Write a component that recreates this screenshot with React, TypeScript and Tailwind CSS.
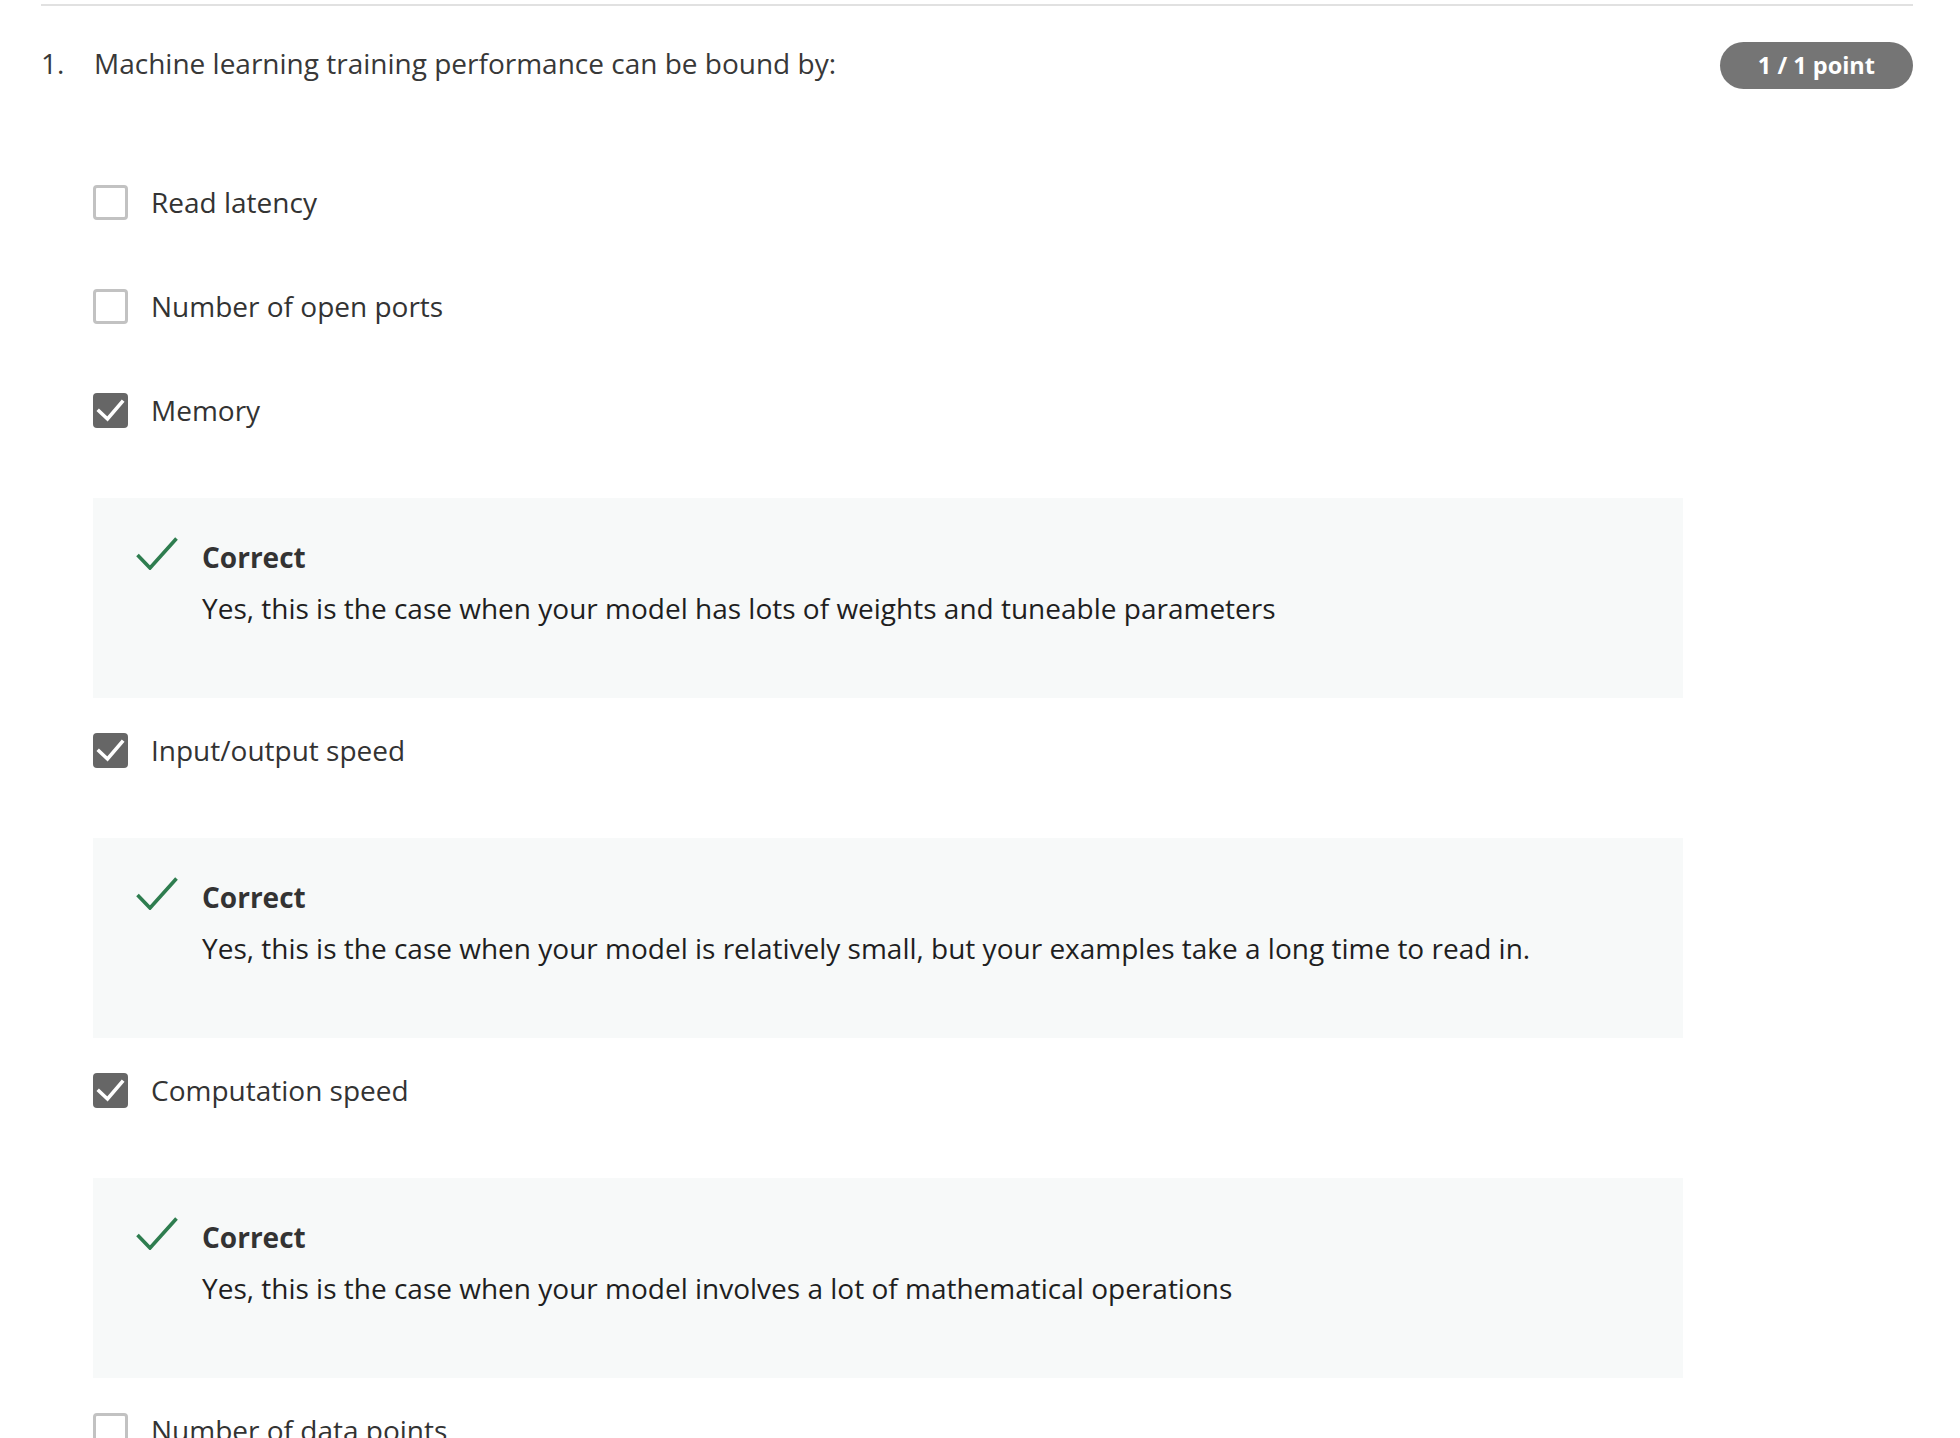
const OPTIONS: { label: string; checked: boolean; feedback?: string }[] = [
  { label: 'Read latency', checked: false },
  { label: 'Number of open ports', checked: false },
  {
    label: 'Memory',
    checked: true,
    feedback: 'Yes, this is the case when your model has lots of weights and tuneable parameters',
  },
  {
    label: 'Input/output speed',
    checked: true,
    feedback:
      'Yes, this is the case when your model is relatively small, but your examples take a long time to read in.',
  },
  {
    label: 'Computation speed',
    checked: true,
    feedback: 'Yes, this is the case when your model involves a lot of mathematical operations',
  },
  { label: 'Number of data points', checked: false },
];

function Checkbox({ checked }: { checked: boolean }) {
  if (checked) {
    return (
      <span className="flex h-[35px] w-[35px] shrink-0 items-center justify-center rounded-[4px] bg-[#666666]">
        <svg width="35" height="35" viewBox="0 0 35 35" fill="none">
          <polyline
            points="6,18 14.5,26 29,9"
            stroke="#ffffff"
            strokeWidth="3.6"
            strokeLinecap="square"
          />
        </svg>
      </span>
    );
  }
  return (
    <span className="h-[35px] w-[35px] shrink-0 rounded-[4px] border-[3px] border-[#c2c2c2] bg-white" />
  );
}

function Feedback({ text }: { text: string }) {
  return (
    <div className="mt-[36px] flex h-[200px] w-[1590px] bg-[#f7f9f9] pl-[43px]">
      <svg className="mt-[39px] shrink-0" width="42" height="33" viewBox="0 0 42 33" fill="none">
        <polyline points="1.5,18 14,31 40.5,1.5" stroke="#2e7d4f" strokeWidth="3.6" />
      </svg>
      <div className="ml-[24px] pt-[39px]">
        <div className="text-[28px] font-bold leading-[40px] text-[#333333]">Correct</div>
        <div className="mt-[11px] text-[28px] leading-[40px] text-[#1f1f1f]">{text}</div>
      </div>
    </div>
  );
}

export default function App() {
  return (
    <div className="min-h-screen overflow-hidden bg-white pl-[41px] pr-[47px] pt-[4px] font-['Open_Sans',sans-serif]">
      <div className="h-[2px] bg-[#e1e1e1]" />

      <div className="mt-[36px] flex items-start justify-between">
        <div className="flex text-[28px] leading-[43px] text-[#383838]">
          <span className="w-[53px]">1.</span>
          <span>Machine learning training performance can be bound by:</span>
        </div>
        <span className="flex h-[47px] items-center rounded-full bg-[#757575] px-[38px] text-[23.5px] font-bold text-white">
          1 / 1 point
        </span>
      </div>

      <div className="mt-[61px] pl-[52px]">
        {OPTIONS.map((opt) => (
          <div key={opt.label}>
            <div className="flex h-[104px] items-center gap-[23px]">
              <Checkbox checked={opt.checked} />
              <span className="text-[28px] leading-[40px] text-[#333333]">{opt.label}</span>
            </div>
            {opt.feedback && <Feedback text={opt.feedback} />}
          </div>
        ))}
      </div>
    </div>
  );
}
